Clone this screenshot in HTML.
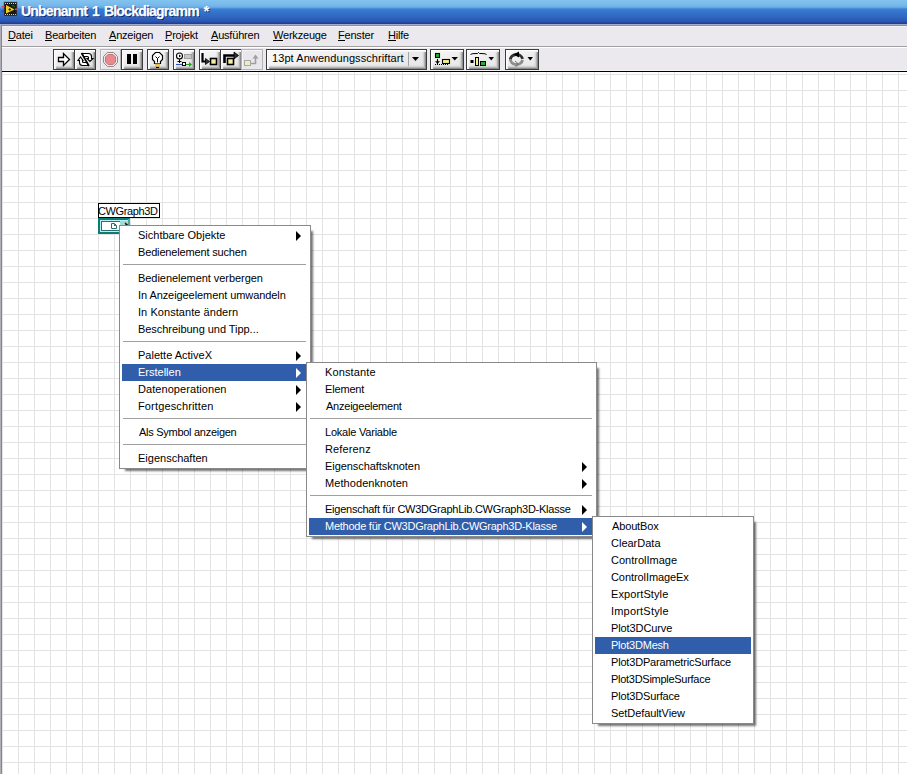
<!DOCTYPE html>
<html><head><meta charset="utf-8">
<style>
*{margin:0;padding:0;box-sizing:border-box}
html,body{width:907px;height:774px;overflow:hidden;background:#fff;font-family:"Liberation Sans",sans-serif;font-size:11px;color:#000}
.a{position:absolute}
#title{left:0;top:0;width:907px;height:24px;background:linear-gradient(to bottom,#82c4ef 0px,#78b8ec 5px,#6eaee8 7px,#5a9ce0 8px,#3a7ed4 9px,#3475ca 12px,#2f66c0 17px,#2b56b4 21px,#2a52b0 22px,#1f3f92 23px,#1f3f92 24px)}
#ttext{left:21px;top:3px;font-size:14px;font-weight:bold;color:#fff;text-shadow:1px 1px 0 #0a1f6a;white-space:pre;letter-spacing:-0.78px;word-spacing:1.8px;-webkit-text-stroke:0.25px #fff}
#tb1{left:0;top:24px;width:907px;height:1px;background:#a3a9c6}
#tb2{left:0;top:25px;width:907px;height:1px;background:#8e8e94}
#menubar{left:0;top:26px;width:907px;height:20px;background:#ebe9ed;border-top:1px solid #f2f1f4}
#msep{left:0;top:46px;width:907px;height:1px;background:#a0a0a0}
#msep2{left:0;top:47px;width:907px;height:1px;background:#fff}
#toolbar{left:0;top:48px;width:907px;height:23px;background:#ebe9ed;border-bottom:1px solid #f3f2f5}
#tline{left:0;top:71px;width:907px;height:1px;background:#000}
#lborder{left:0;top:25px;width:2px;height:749px;background:linear-gradient(to right,#aeaeb6 1px,#86868e 1px)}
#canvas{left:2px;top:72px;width:905px;height:702px;background-color:#fff;
 background-image:linear-gradient(to right,#e3e3e3 1px,transparent 1px),linear-gradient(to bottom,#e3e3e3 1px,transparent 1px);
 background-size:16px 16px;background-position:0px 2px}
.mi{position:absolute;top:29px;white-space:pre;letter-spacing:-0.2px}
.mi u{text-decoration:none;background:linear-gradient(#000,#000) no-repeat 0 11px/100% 1px}
.btn{position:absolute;top:49px;height:21px;border:1px solid #3c3c3c;background:linear-gradient(160deg,#fbfbfb 0%,#eeeeee 45%,#e6e6e6 100%);box-shadow:inset 1px 1px 0 #fff,inset 2px 2px 1px #f6f6f6,inset -1px -1px 0 #8c8c8c,inset -2px -2px 1px #b0b0b0,inset -3px -3px 2px #d2d2d2}
.dis{border-color:#b4b4b4;background:#e9e7eb;box-shadow:inset 1px 1px 0 #f4f4f6}
#tbsvg{position:absolute;left:0;top:48px;width:907px;height:23px}
#font{position:absolute;left:266px;top:49px;width:161px;height:21px;border:1px solid #3c3c3c;background:linear-gradient(160deg,#fbfbfb 0%,#eeeeee 45%,#e6e6e6 100%);box-shadow:inset 1px 1px 0 #fff,inset 2px 2px 1px #f6f6f6,inset -1px -1px 0 #8c8c8c,inset -2px -2px 1px #b0b0b0,inset -3px -3px 2px #d2d2d2}
#fonttext{position:absolute;left:272px;top:51px;white-space:pre;line-height:14px;letter-spacing:0.08px}
#fsep{position:absolute;left:408px;top:52px;width:1px;height:14px;background:#a4a4a4}
#label{position:absolute;left:98px;top:203px;width:62px;height:15px;border:1px solid #000;background:#fff}
#labeltext{position:absolute;left:98px;top:204px;line-height:15px;white-space:pre;letter-spacing:-0.375px}
.menu{position:absolute;background:#fff;border:1px solid #8a8a8a;box-shadow:4px 4px 2px -2px rgba(0,0,0,.55)}
.it{position:absolute;left:2px;height:17px;line-height:17px;white-space:pre}
.it span{position:absolute;left:16px;top:0}
.hl{background:#305eaa;color:#fff}
.sep{position:absolute;left:3px;height:1px;background:#a0a0a0}
.arr{position:absolute;top:4px;width:0;height:0;border-top:5px solid transparent;border-bottom:5px solid transparent;border-left:5px solid #000}
.hl .arr{border-left-color:#fff}
</style></head><body>
<div id="title" class="a"></div>
<div id="ttext" class="a">Unbenannt 1 Blockdiagramm *</div>
<div id="tb1" class="a"></div><div id="tb2" class="a"></div>
<div id="menubar" class="a"></div>
<div id="msep" class="a"></div><div id="msep2" class="a"></div>
<div id="toolbar" class="a"></div>
<div id="tline" class="a"></div>
<div id="canvas" class="a"></div>
<div id="lborder" class="a"></div>

<div class="mi" style="left:8px"><u>D</u>atei</div>
<div class="mi" style="left:45px"><u>B</u>earbeiten</div>
<div class="mi" style="left:109px"><u>A</u>nzeigen</div>
<div class="mi" style="left:165px"><u>P</u>rojekt</div>
<div class="mi" style="left:211px"><u>A</u>usführen</div>
<div class="mi" style="left:273px"><u>W</u>erkzeuge</div>
<div class="mi" style="left:338px"><u>F</u>enster</div>
<div class="mi" style="left:388px"><u>H</u>ilfe</div>


<div class="btn" style="left:53px;width:22px"></div>
<div class="btn" style="left:74px;width:22px"></div>
<div class="btn dis" style="left:100px;width:21px"></div>
<div class="btn" style="left:121px;width:22px"></div>
<div class="btn" style="left:147px;width:22px"></div>
<div class="btn" style="left:173px;width:22px"></div>
<div class="btn" style="left:199px;width:22px"></div>
<div class="btn" style="left:220px;width:22px"></div>
<div class="btn dis" style="left:241px;width:22px"></div>
<div id="font"></div>
<div id="fsep"></div>
<div id="fonttext">13pt Anwendungsschriftart</div>
<div class="btn" style="left:430px;width:34px"></div>
<div class="btn" style="left:466px;width:34px"></div>
<div class="btn" style="left:505px;width:34px"></div>
<svg id="tbsvg" viewBox="0 48 907 23">
<!--ICONS-->
<g fill="#fff" stroke="#000" stroke-width="1.3" stroke-linejoin="miter">
<!-- run arrow -->
<path d="M58.5 57.5H63.5V53.5L69.5 59.5L63.5 65.5V61.5H58.5Z"/>
</g>
<!-- run continuously -->
<g fill="#fff" stroke="#000" stroke-width="1.1" stroke-linejoin="miter">
<path d="M82 53.5H88.5Q91.5 53.5 91.5 56.5V58.5H93L90 61.5L87 58.5H88.5V57.5Q88.5 56.5 87.5 56.5H83.8Z"/>
<path d="M88.5 65.5H82.5Q79.5 65.5 79.5 62.5V60.5H78L80.5 57L83 60.5H82.5V61.5Q82.5 62.5 83.5 62.5H86.8Z"/>
</g>
<path d="M81.5 53L89 66" fill="none" stroke="#000" stroke-width="1.6"/>
<!-- abort (disabled) -->
<path d="M107.5 52.5H113.5L117.5 56.5V62.5L113.5 66.5H107.5L103.5 62.5V56.5Z" fill="none" stroke="#8c8c8c" stroke-width="1"/>
<path d="M108 54.5H113L115.5 57V62L113 64.5H108L105.5 62V57Z" fill="#e8898c" stroke="#c87678" stroke-width="1"/>
<!-- pause -->
<rect x="127" y="54" width="4" height="10" fill="#000"/>
<rect x="133" y="54" width="4" height="10" fill="#000"/>
<!-- lightbulb -->
<path d="M155.5 52.5H159.5L162.5 55.5V59.5L160.5 61.5V63.5H154.5V61.5L152.5 59.5V55.5Z" fill="#fff" stroke="#000" stroke-width="1.2"/>
<path d="M155.5 56.5L157.5 58.5L159.5 56.5M157.5 58.5V62.5" fill="none" stroke="#000" stroke-width="1"/>
<rect x="155" y="63.5" width="5" height="1.3" fill="#d8b020"/>
<rect x="155" y="65.5" width="5" height="1.3" fill="#d8b020"/>
<rect x="156" y="67" width="3" height="1" fill="#000"/>
<!-- retain wire values -->
<circle cx="179.5" cy="56" r="3" fill="#fff" stroke="#000" stroke-width="1.1"/>
<path d="M179 54.5L181 56L179 57.5Z" fill="#000"/>
<path d="M179.5 59V63" stroke="#000" stroke-width="1"/>
<path d="M177.5 61.5H181.5" stroke="#000" stroke-width="1"/>
<rect x="184.5" y="54.5" width="7" height="4" fill="#c8c8c8" stroke="#a0a0a0" stroke-width="1"/>
<path d="M176 64.5H183" stroke="#3050c0" stroke-width="1"/>
<rect x="182.5" y="62.5" width="3" height="3" fill="#fff" stroke="#000" stroke-width="1"/>
<path d="M186 64.5H190" stroke="#20a020" stroke-width="1"/>
<path d="M189 62L192 64.5L189 67Z" fill="#20a020"/>
<!-- step into -->
<path d="M202.5 53V61.5H206.5" fill="none" stroke="#000" stroke-width="2.2"/>
<path d="M205.5 58.5L209.5 61.5L205.5 64.5Z" fill="#303030" stroke="#000" stroke-width="0.8"/>
<rect x="210.5" y="58.5" width="6" height="6" fill="#f4f0a0" stroke="#000" stroke-width="1.6"/>
<!-- step over -->
<path d="M224.5 63V55.5H235" fill="none" stroke="#000" stroke-width="2.6"/>
<path d="M234 52L238.5 55.5L234 59Z" fill="#303030" stroke="#000" stroke-width="0.8"/>
<rect x="227.5" y="58.5" width="6" height="6" fill="#f4f0a0" stroke="#000" stroke-width="1.6"/>
<!-- step out disabled -->
<rect x="244.5" y="60.5" width="6" height="5" fill="#eeeebb" stroke="#a8a8a8" stroke-width="1"/>
<path d="M251 63.5H255.5V58" fill="none" stroke="#a0a0a0" stroke-width="1.6"/>
<path d="M252.5 58.5L255.5 54.5L258.5 58.5Z" fill="#a0a0a0"/>
<!-- font dropdown arrow -->
<path d="M412 57H419L415.5 61Z" fill="#000"/>
<!-- align -->
<rect x="435.5" y="53.5" width="4" height="4" fill="#20b030" stroke="#000" stroke-width="1.1"/>
<path d="M437.5 59V65" stroke="#000" stroke-width="1.1"/>
<path d="M435 61.2H440L437.5 63.8Z" fill="#000"/>
<path d="M435 64.5H448" stroke="#000" stroke-width="1" stroke-dasharray="1 1"/>
<rect x="442.5" y="59.5" width="7" height="4" fill="#f4f08c" stroke="#000" stroke-width="1.1"/>
<path d="M451.5 57H458L454.75 60.6Z" fill="#000"/>
<!-- distribute -->
<path d="M470.5 54.5Q471 53.5 476 53.5H477.5L478.5 52.5L479.5 53.5H481Q486 53.5 486.5 54.5" fill="none" stroke="#000" stroke-width="1"/>
<rect x="470.5" y="60" width="3" height="3" fill="#000"/>
<rect x="475.5" y="57.5" width="3" height="8" fill="#f4f08c" stroke="#000" stroke-width="1"/>
<rect x="480.5" y="61.5" width="5" height="4" fill="#20b030" stroke="#000" stroke-width="1"/>
<path d="M488.5 57H494L491.25 60.5Z" fill="#000"/>
<!-- reorder -->
<path d="M510.5 60A6 5 0 0 1 522.5 59" fill="none" stroke="#333" stroke-width="2.8"/>
<path d="M510.5 59A6 5 0 0 0 522.5 60" fill="none" stroke="#8e8e8e" stroke-width="2.8"/>
<path d="M513.5 54.5L519 51.5V57.5Z" fill="#000"/>
<path d="M515 61L518.5 64L515.5 67" fill="none" stroke="#6a6a6a" stroke-width="0.9"/>
<path d="M527.5 57H533L530.25 60.5Z" fill="#000"/>
<!--/ICONS-->
</svg>

<svg class="a" style="left:0;top:0;width:22px;height:20px" viewBox="0 0 22 20">
<rect x="4" y="2" width="13" height="14" fill="#1a1a1a" stroke="#506070" stroke-width="0.6"/>
<g fill="#cfcfcf"><rect x="5" y="3" width="1" height="1"/><rect x="7" y="3" width="1" height="1"/><rect x="9" y="3" width="1" height="1"/><rect x="11" y="3" width="1" height="1"/><rect x="13" y="3" width="1" height="1"/><rect x="15" y="3" width="1" height="1"/>
<rect x="5" y="14" width="1" height="1"/><rect x="7" y="14" width="1" height="1"/><rect x="9" y="14" width="1" height="1"/><rect x="11" y="14" width="1" height="1"/><rect x="13" y="14" width="1" height="1"/><rect x="15" y="14" width="1" height="1"/></g>
<path d="M12 6Q14 5 15 7" stroke="#2a8a2a" stroke-width="0.8" fill="none"/>
<path d="M6 5L14.5 9.5L6 13.5Z" fill="#f2d020"/>
<path d="M8.5 9.5H11M9.75 8.2V10.8" stroke="#202000" stroke-width="1"/>
<rect x="1.5" y="6" width="3" height="1.5" fill="#d04858"/>
<rect x="1.5" y="10.5" width="3" height="1.5" fill="#2a44d0"/>
<rect x="15" y="8.5" width="3" height="1.5" fill="#d04858"/>
</svg>
<div class="a" style="left:98px;top:218px;width:32px;height:16px;background:#0c7a76"></div>
<div class="a" style="left:100px;top:220px;width:28px;height:12px;background:#b8f2f0"></div>
<div class="a" style="left:101px;top:221px;width:26px;height:10px;background:#fff;border:1px solid #2b6d6a"></div>
<svg class="a" style="left:98px;top:218px;width:32px;height:16px" viewBox="0 0 32 16">
<path d="M13.5 5.5H16.5L18.5 7.5V10.5H13.5Z" fill="#fff" stroke="#2b6d6a" stroke-width="1"/>
<path d="M16 5.5L18.5 8H16Z" fill="#2b6d6a"/>
<rect x="30" y="1" width="2" height="7" fill="#4aa6a2"/>
<rect x="22" y="3" width="8" height="4" fill="#a6dad6"/>
<path d="M27 4.8L29.6 6.4L28.2 7.6Z" fill="#000" stroke="#000" stroke-width="0.6"/>
</svg>
<div id="label"></div>
<div id="labeltext">CWGraph3D</div>
<!--MENUS-->
<div class="menu" style="left:119px;top:225px;width:192px;height:244px">
<div class="it" style="top:1px;width:186px"><span style="left:16px;letter-spacing:0.0px">Sichtbare Objekte</span><i class="arr" style="left:174px"></i></div>
<div class="it" style="top:18px;width:186px"><span style="left:16px;letter-spacing:-0.158px">Bedienelement suchen</span></div>
<div class="sep" style="top:38px;width:183px"></div>
<div class="it" style="top:44px;width:186px"><span style="left:16px;letter-spacing:-0.045px">Bedienelement verbergen</span></div>
<div class="it" style="top:61px;width:186px"><span style="left:16px;letter-spacing:-0.077px">In Anzeigeelement umwandeln</span></div>
<div class="it" style="top:78px;width:186px"><span style="left:16px;letter-spacing:0.056px">In Konstante ändern</span></div>
<div class="it" style="top:95px;width:186px"><span style="left:16px;letter-spacing:-0.043px">Beschreibung und Tipp...</span></div>
<div class="sep" style="top:115px;width:183px"></div>
<div class="it" style="top:121px;width:186px"><span style="left:16px;letter-spacing:0.0px">Palette ActiveX</span><i class="arr" style="left:174px"></i></div>
<div class="it hl" style="top:138px;width:186px"><span style="left:16px;letter-spacing:0.0px">Erstellen</span><i class="arr" style="left:174px"></i></div>
<div class="it" style="top:155px;width:186px"><span style="left:16px;letter-spacing:0.067px">Datenoperationen</span><i class="arr" style="left:174px"></i></div>
<div class="it" style="top:172px;width:186px"><span style="left:16px;letter-spacing:0.143px">Fortgeschritten</span><i class="arr" style="left:174px"></i></div>
<div class="sep" style="top:192px;width:183px"></div>
<div class="it" style="top:198px;width:186px"><span style="left:17px;letter-spacing:-0.278px">Als Symbol anzeigen</span></div>
<div class="sep" style="top:218px;width:183px"></div>
<div class="it" style="top:224px;width:186px"><span style="left:16px;letter-spacing:0.0px">Eigenschaften</span></div>
</div>
<div class="menu" style="left:306px;top:362px;width:291px;height:175px">
<div class="it" style="top:1px;width:285px"><span style="left:16px;letter-spacing:0.125px">Konstante</span></div>
<div class="it" style="top:18px;width:285px"><span style="left:16px;letter-spacing:-0.167px">Element</span></div>
<div class="it" style="top:35px;width:285px"><span style="left:17px;letter-spacing:-0.231px">Anzeigeelement</span></div>
<div class="sep" style="top:55px;width:282px"></div>
<div class="it" style="top:61px;width:285px"><span style="left:16px;letter-spacing:-0.214px">Lokale Variable</span></div>
<div class="it" style="top:78px;width:285px"><span style="left:16px;letter-spacing:0.143px">Referenz</span></div>
<div class="it" style="top:95px;width:285px"><span style="left:16px;letter-spacing:-0.059px">Eigenschaftsknoten</span><i class="arr" style="left:273px"></i></div>
<div class="it" style="top:112px;width:285px"><span style="left:16px;letter-spacing:0.077px">Methodenknoten</span><i class="arr" style="left:273px"></i></div>
<div class="sep" style="top:132px;width:282px"></div>
<div class="it" style="top:138px;width:285px"><span style="left:16px;letter-spacing:-0.25px">Eigenschaft für CW3DGraphLib.CWGraph3D-Klasse</span><i class="arr" style="left:273px"></i></div>
<div class="it hl" style="top:155px;width:285px"><span style="left:16px;letter-spacing:-0.25px">Methode für CW3DGraphLib.CWGraph3D-Klasse</span><i class="arr" style="left:273px"></i></div>
</div>
<div class="menu" style="left:592px;top:516px;width:162px;height:208px">
<div class="it" style="top:1px;width:156px"><span style="left:17px;letter-spacing:-0.143px">AboutBox</span></div>
<div class="it" style="top:18px;width:156px"><span style="left:16px;letter-spacing:0.0px">ClearData</span></div>
<div class="it" style="top:35px;width:156px"><span style="left:16px;letter-spacing:0.0px">ControlImage</span></div>
<div class="it" style="top:52px;width:156px"><span style="left:16px;letter-spacing:-0.077px">ControlImageEx</span></div>
<div class="it" style="top:69px;width:156px"><span style="left:16px;letter-spacing:0.1px">ExportStyle</span></div>
<div class="it" style="top:86px;width:156px"><span style="left:16px;letter-spacing:0.2px">ImportStyle</span></div>
<div class="it" style="top:103px;width:156px"><span style="left:16px;letter-spacing:-0.1px">Plot3DCurve</span></div>
<div class="it hl" style="top:120px;width:156px"><span style="left:16px;letter-spacing:-0.222px">Plot3DMesh</span></div>
<div class="it" style="top:137px;width:156px"><span style="left:16px;letter-spacing:-0.182px">Plot3DParametricSurface</span></div>
<div class="it" style="top:154px;width:156px"><span style="left:16px;letter-spacing:-0.278px">Plot3DSimpleSurface</span></div>
<div class="it" style="top:171px;width:156px"><span style="left:16px;letter-spacing:-0.167px">Plot3DSurface</span></div>
<div class="it" style="top:188px;width:156px"><span style="left:16px;letter-spacing:-0.077px">SetDefaultView</span></div>
</div>
<!--/MENUS-->
</body></html>
